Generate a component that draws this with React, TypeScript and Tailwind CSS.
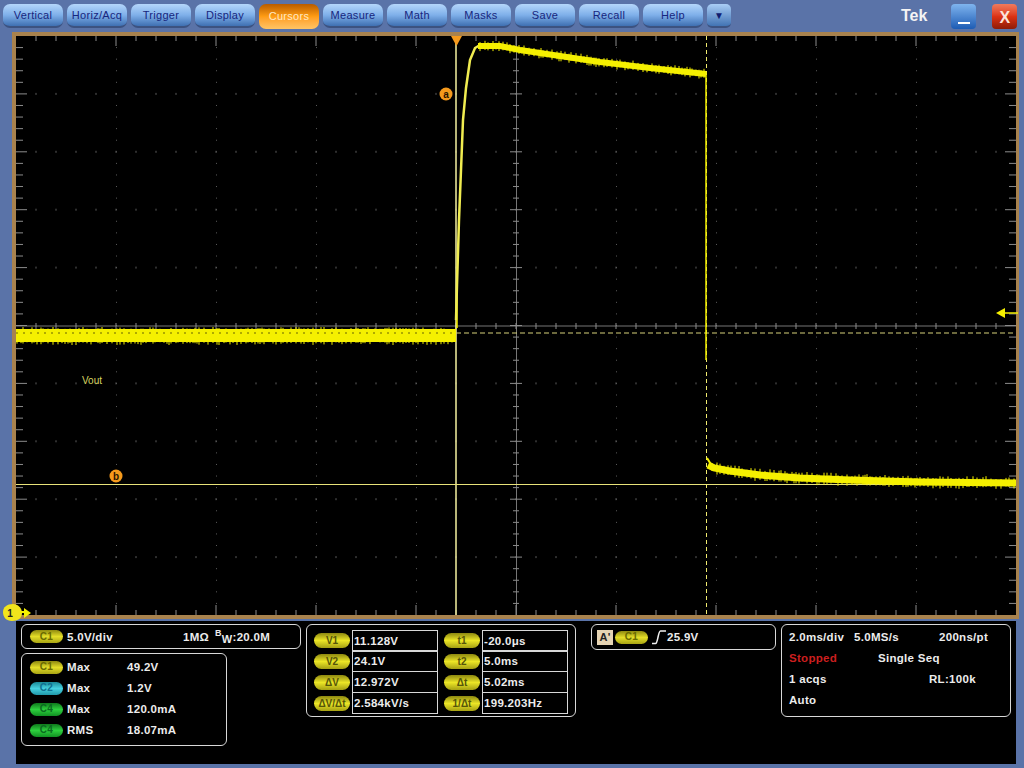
import { Fragment, type ReactNode } from "react"

// Seeded noise so the trace looks the same on every load
let seed = 42
const rnd = () => {
  seed = (seed * 16807) % 2147483647
  return seed / 2147483647
}

const menuItems = ["Vertical", "Horiz/Acq", "Trigger", "Display", "Cursors", "Measure", "Math", "Masks", "Save", "Recall", "Help"]

const topPoints = [[478, 46], [500, 46], [520, 50], [560, 56], [600, 62], [650, 68], [706, 74]]
const decayPoints = [[708, 465], [714, 468], [730, 471], [760, 475], [800, 478], [850, 480], [920, 482], [1016, 483]]

const lerp = (pts: number[][], x: number) => {
  for (let i = 0; i < pts.length - 1; i++) {
    if (x <= pts[i + 1][0]) {
      const t = (x - pts[i][0]) / (pts[i + 1][0] - pts[i][0])
      return pts[i][1] + (pts[i + 1][1] - pts[i][1]) * t
    }
  }
  return pts[pts.length - 1][1]
}

const range = (n: number) => Array.from({ length: n }, (_, i) => i)
const toLine = (pts: number[][]) => pts.map((p) => p.join(",")).join(" ")

// vertical noise spikes on a thick trace
function spikes(from: number, to: number, center: (x: number) => number, half: number, reach: number) {
  let d = ""
  for (let x = from; x < to; x += 2 + Math.floor(rnd() * 4)) {
    const c = center(x)
    d += `M${x} ${(c - half - rnd() * reach).toFixed(1)}V${(c + half + rnd() * reach).toFixed(1)}`
  }
  return d
}

function Graticule() {
  const divY = 57.9
  const tickY = divY / 5
  let minor = ""
  let dots = ""
  range(51).forEach((i) => {
    const x = 16 + i * 20
    const big = i % 5 === 0
    if (i > 0 && i < 50) {
      minor += `M${x} 36V${big ? 46 : 41}M${x} 615V${big ? 605 : 610}M${x} 323V329`
      range(9).forEach((r) => {
        const gy = 36 + (r + 1) * divY
        if (r !== 4) dots += `M${x} ${gy - 1}v2`
      })
    }
  })
  range(51).forEach((i) => {
    const y = 36 + i * tickY
    const big = i % 5 === 0
    if (i > 0 && i < 50) {
      minor += `M16 ${y}H${big ? 27 : 23}M1016 ${y}H${big ? 1005 : 1009}M${big ? 510 : 513} ${y}H${big ? 522 : 519}`
      range(9).forEach((c) => {
        const gx = 16 + (c + 1) * 100
        if (c !== 4) dots += `M${gx} ${y}h1`
      })
    }
  })
  return (
    <g fill="none">
      <path d={dots} stroke="#5c5c5c" strokeWidth="1" />
      <path d="M16 326H1016M516.5 36V615" stroke="#767676" strokeWidth="1" />
      <path d={minor} stroke="#8c8c8c" strokeWidth="1" />
    </g>
  )
}

function Trace() {
  const yellow = "#f5f000"
  return (
    <g fill="none">
      {/* cursors */}
      <path d="M456 36V615" stroke="#f6f2a0" strokeWidth="1.5" />
      <path d="M16 484.5H1016" stroke="#e8e27a" strokeWidth="1" />
      <path d="M456 333H1016" stroke="#d8d27a" strokeWidth="1" strokeDasharray="5 3" />
      <path d="M706.5 36V615" stroke="#f0ea70" strokeWidth="1" strokeDasharray="4 3" />
      {/* waveform */}
      <rect x="16" y="329" width="440" height="13" fill={yellow} />
      <path d={spikes(17, 456, () => 336, 6, 3)} stroke={yellow} strokeWidth="1" />
      <path d="M16 333H456" stroke="#6a6600" strokeWidth="1" strokeDasharray="2 5" />
      <path d="M457 328V270" stroke={yellow} strokeWidth="1.5" />
      <polyline points={toLine([[456, 320], [457, 285], [459, 220], [461, 170], [463, 120], [466, 88], [470, 60], [475, 48], [480, 45]])} stroke="#f0ec50" strokeWidth="2.5" />
      <polyline points={toLine(topPoints)} stroke={yellow} strokeWidth="6" />
      <path d={spikes(480, 706, (x) => lerp(topPoints, x), 3, 2.5)} stroke={yellow} strokeWidth="1" />
      <path d="M706 72V360" stroke={yellow} strokeWidth="1.5" />
      <polyline points={toLine(decayPoints)} stroke={yellow} strokeWidth="7" />
      <path d={spikes(712, 1016, (x) => lerp(decayPoints, x), 3.5, 3)} stroke={yellow} strokeWidth="1" />
      <path d="M707 458L712 466" stroke={yellow} strokeWidth="2" />
    </g>
  )
}

function Markers() {
  return (
    <g>
      <path d="M451 36H462L456.5 46Z" fill="#f59a1c" />
      <circle cx="446" cy="94" r="6.5" fill="#f59a1c" />
      <text x="446" y="97.5" textAnchor="middle" fontSize="10" fontWeight="700" fill="#2a1500">a</text>
      <circle cx="116" cy="476" r="6.5" fill="#f59a1c" />
      <text x="116" y="479.5" textAnchor="middle" fontSize="10" fontWeight="700" fill="#2a1500">b</text>
      <path d="M1018 313H1003" stroke="#f5f000" strokeWidth="1.5" />
      <path d="M996 313L1005 308V318Z" fill="#f5f000" />
      <path d="M3 612C3 607 7 604 13 604C18 604 22 608 22 613C22 618 18 621 12 621C6 621 3 617 3 612Z" fill="#f2e51c" />
      <text x="10" y="617" textAnchor="middle" fontSize="10" fontWeight="700" fill="#222">1</text>
      <path d="M20 612H25" stroke="#f5f000" strokeWidth="2" />
      <path d="M31 613L24 608V618Z" fill="#f5f000" />
    </g>
  )
}

function Pill({ children, color = "yellow" }: { children: ReactNode; color?: "yellow" | "cyan" | "green" }) {
  const tone = {
    yellow: "from-[#8f8a10] via-[#e4de28] to-[#a8a414] text-[#6a6a00]",
    cyan: "from-[#1a8a98] via-[#45d2e0] to-[#2098aa] text-[#107090]",
    green: "from-[#0f7a1c] via-[#2dd03e] to-[#109022] text-[#0a6a20]",
  }[color]
  return (
    <span className={`flex h-[13px] w-[33px] shrink-0 items-center justify-center rounded-full bg-linear-to-b text-[10px] font-bold ${tone}`}>
      {children}
    </span>
  )
}

function CursorPill({ children }: { children: ReactNode }) {
  return (
    <span className="flex h-[15px] w-[36px] shrink-0 items-center justify-center rounded-full bg-linear-to-b from-[#8d8810] via-[#ece626] to-[#a5a014] text-[10px] font-bold tracking-normal text-[#55550a]">
      {children}
    </span>
  )
}

const Panel = ({ className, children }: { className: string; children: ReactNode }) => (
  <div className={`rounded-[6px] border border-[#d8d8d8] ${className}`}>{children}</div>
)

const measurements: [string, "yellow" | "cyan" | "green", string, string][] = [
  ["C1", "yellow", "Max", "49.2V"],
  ["C2", "cyan", "Max", "1.2V"],
  ["C4", "green", "Max", "120.0mA"],
  ["C4", "green", "RMS", "18.07mA"],
]

const cursorRows = [
  ["V1", "11.128V", "t1", "-20.0μs"],
  ["V2", "24.1V", "t2", "5.0ms"],
  ["ΔV", "12.972V", "Δt", "5.02ms"],
  ["ΔV/Δt", "2.584kV/s", "1/Δt", "199.203Hz"],
]

export default function App() {
  return (
    <div className="flex h-[768px] w-[1024px] flex-col overflow-hidden bg-[#5a73a8] font-['Liberation_Sans',Arial,sans-serif]">
      {/* menu bar */}
      <div className="flex h-[32px] shrink-0 items-start pl-[3px] pt-[4px]">
        <div className="flex gap-[4px]">
          {menuItems.map((item) =>
            item === "Cursors" ? (
              <div
                key={item}
                className="flex h-[25px] w-[60px] items-center justify-center rounded-[7px] bg-linear-to-b from-[#b85c00] via-[#ff9c14] to-[#ffc463] text-[11px] tracking-[0.3px] text-[#ffe9c4]"
              >
                {item}
              </div>
            ) : (
              <div
                key={item}
                className="flex h-[24px] w-[60px] items-center justify-center rounded-[7px] border-b-2 border-[#3c5280] bg-linear-to-b from-[#b4d6fa] via-[#7fb0ea] to-[#3f70b2] text-[11px] tracking-[0.3px] text-[#17267e]"
              >
                {item}
              </div>
            ),
          )}
          <div className="flex h-[24px] w-[24px] items-center justify-center rounded-[5px] border-b-2 border-[#3c5280] bg-linear-to-b from-[#a9cdf5] to-[#4274b4] text-[10px] text-[#101c70]">
            ▼
          </div>
        </div>
        <span className="ml-[170px] mt-[2px] text-[16px] leading-[20px] font-bold text-[#f4f4f4]">Tek</span>
        <div className="ml-[24px] flex h-[25px] w-[25px] items-end justify-center rounded-[4px] bg-linear-to-b from-[#7fb4ee] to-[#1c5cb4] pb-[5px]">
          <span className="h-[2px] w-[12px] bg-white" />
        </div>
        <div className="ml-[16px] flex h-[25px] w-[25px] items-center justify-center rounded-[4px] bg-linear-to-b from-[#ef7a5c] via-[#dc3214] to-[#8e1c08] pt-[3px] text-[16px] leading-none font-bold text-[#fbe4dc]">
          X
        </div>
      </div>

      {/* scope display */}
      <div className="ml-[12px] h-[587px] w-[1007px] shrink-0 border-b-[4px] border-l-[4px] border-r-[3px] border-t-[4px] border-[#a8824e] bg-black">
        <div className="relative h-[579px] w-[1000px]">
          <svg viewBox="16 36 1000 579" className="block h-[579px] w-[1000px] overflow-visible">
            <Graticule />
            <Trace />
            <Markers />
          </svg>
          <span className="absolute left-[66px] top-[339px] text-[10px] leading-[12px] text-[#d8d460]">Vout</span>
        </div>
      </div>

      {/* readouts */}
      <div className="ml-[16px] mt-[2px] flex h-[143px] w-[1000px] shrink-0 gap-[5px] bg-black pl-[5px] pt-[3px] text-[11.5px] leading-[14px] font-bold tracking-[0.3px] text-[#ececec]">
        <div className="flex w-[280px] flex-col gap-[4px]">
          <Panel className="flex h-[25px] items-center pl-[8px]">
            <Pill>C1</Pill>
            <span className="ml-[4px] w-[116px]">5.0V/div</span>
            <span className="w-[32px]">1MΩ</span>
            <span className="relative">
              <sup className="text-[9px]">B</sup>
              <sub className="text-[11px]">W</sub>:20.0M
            </span>
          </Panel>
          <Panel className="flex h-[93px] w-[206px] flex-col gap-[7px] pl-[8px] pt-[6px]">
            {measurements.map(([ch, color, kind, value], i) => (
              <div key={i} className="flex items-center">
                <Pill color={color}>{ch}</Pill>
                <span className="ml-[4px] w-[60px]">{kind}</span>
                <span>{value}</span>
              </div>
            ))}
          </Panel>
        </div>

        <Panel className="h-[93px] w-[270px] pl-[7px] pt-[5px]">
          <div className="grid grid-cols-[38px_92px_38px_86px] grid-rows-[repeat(4,21px)] items-center">
            {cursorRows.map((row, i) => (
              <Fragment key={row[0]}>
                <CursorPill>{row[0]}</CursorPill>
                <span className={`flex h-[22px] w-[86px] items-center border border-[#d8d8d8] pl-[1px] ${i > 0 ? "-mt-[1px]" : ""}`}>{row[1]}</span>
                <CursorPill>{row[2]}</CursorPill>
                <span className={`flex h-[22px] w-[86px] items-center border border-[#d8d8d8] pl-[1px] ${i > 0 ? "-mt-[1px]" : ""}`}>{row[3]}</span>
              </Fragment>
            ))}
          </div>
        </Panel>

        <Panel className="ml-[10px] flex h-[26px] w-[185px] items-center pl-[5px]">
          <span className="flex h-[15px] w-[16px] items-center justify-center bg-[#e6d4b4] text-[11px] text-[#222]">A'</span>
          <span className="ml-[2px]">
            <Pill>C1</Pill>
          </span>
          <svg viewBox="0 0 16 16" className="ml-[3px] h-[16px] w-[16px]" fill="none" stroke="#f0f0f0" strokeWidth="1.5">
            <path d="M1 14.5H4.5C7 14.5 7 2 9.5 2H15" />
          </svg>
          <span>25.9V</span>
        </Panel>

        <Panel className="flex h-[93px] w-[230px] flex-col gap-[7px] pl-[7px] pt-[5px]">
          <div className="flex">
            <span className="w-[65px]">2.0ms/div</span>
            <span className="w-[85px]">5.0MS/s</span>
            <span>200ns/pt</span>
          </div>
          <div className="flex">
            <span className="w-[89px] text-[#cc1f1f]">Stopped</span>
            <span>Single Seq</span>
          </div>
          <div className="flex">
            <span className="w-[140px]">1 acqs</span>
            <span>RL:100k</span>
          </div>
          <div>Auto</div>
        </Panel>
      </div>
    </div>
  )
}
